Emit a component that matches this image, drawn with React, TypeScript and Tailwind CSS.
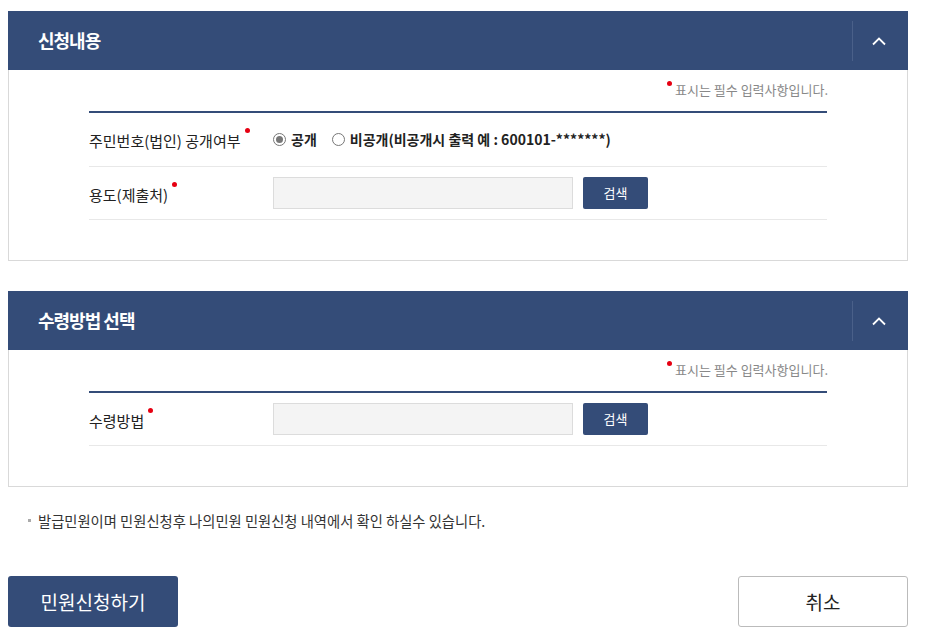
const font = { fontFamily: '"Noto Sans CJK KR", "Noto Sans", sans-serif' };

function Req() {
	return <span className="inline-block w-[5px] h-[5px] rounded-full bg-[#e60012] align-top ml-[4px] -mt-[2px]"></span>;
}

function Header({ title }: { title: string }) {
	return (
		<div className="h-[59px] bg-[#344c78] flex items-center justify-between">
			<h2 className="pl-[30px] text-[18px] font-bold text-white tracking-[-1px]">{title}</h2>
			<div className="h-[40px] w-[56px] border-l border-[#4a6089] flex items-center justify-center pr-[4px]">
				<svg width="16" height="10" viewBox="0 0 16 10" fill="none">
					<path d="M2 8.5 L8 2.5 L14 8.5" stroke="white" strokeWidth="1.8" />
				</svg>
			</div>
		</div>
	);
}

function SearchField() {
	return (
		<div className="flex items-center gap-[10px]">
			<div className="w-[300px] h-[32px] bg-[#f4f4f4] border border-[#dcdcdc]"></div>
			<button className="w-[65px] h-[32px] bg-[#344c78] text-white text-[13px] rounded-[2px]">검색</button>
		</div>
	);
}

function Note() {
	return (
		<div className="flex justify-end pr-[79px] pt-[8px] h-[41px] text-[13px] text-[#888]">
			<span className="inline-block w-[5px] h-[5px] rounded-full bg-[#e60012] mt-[3px] mr-[3px]"></span>
			<span className="mt-[2px]">표시는 필수 입력사항입니다.</span>
		</div>
	);
}

export default function App() {
	return (
		<div className="bg-white w-[928px] h-[634px] pl-[8px] pr-[20px] pt-[11px]" style={font}>
			<section>
				<Header title="신청내용" />
				<div className="border border-t-0 border-[#d9d9d9] h-[191px]">
					<Note />
					<div className="mx-[80px] border-t-2 border-[#344c78]">
						<div className="h-[54px] flex items-center border-b border-[#e8e8e8]">
							<div className="w-[184px] text-[15px] text-[#222] pt-[4px]">
								주민번호(법인) 공개여부<Req />
							</div>
							<label className="flex items-center text-[14px] font-bold text-[#222]">
								<span className="w-[13px] h-[13px] rounded-full border border-[#777] flex items-center justify-center mr-[5px]">
									<span className="w-[7px] h-[7px] rounded-full bg-[#777]"></span>
								</span>
								공개
							</label>
							<label className="flex items-center text-[14px] font-bold text-[#222] ml-[15px]">
								<span className="w-[13px] h-[13px] rounded-full border border-[#777] mr-[5px]"></span>
								비공개(비공개시 출력 예 : 600101-*******)
							</label>
						</div>
						<div className="h-[53px] flex items-center border-b border-[#e8e8e8]">
							<div className="w-[184px] text-[15px] text-[#222] pt-[4px]">
								용도(제출처)<Req />
							</div>
							<SearchField />
						</div>
					</div>
				</div>
			</section>

			<section className="mt-[30px]">
				<Header title="수령방법 선택" />
				<div className="border border-t-0 border-[#d9d9d9] h-[137px]">
					<Note />
					<div className="mx-[80px] border-t-2 border-[#344c78]">
						<div className="h-[53px] flex items-center border-b border-[#e8e8e8]">
							<div className="w-[184px] text-[15px] text-[#222] pt-[4px]">
								수령방법<Req />
							</div>
							<SearchField />
						</div>
					</div>
				</div>
			</section>

			<p className="mt-[23px] pl-[20px] flex items-center text-[14.3px] text-[#333]">
				<span className="w-[3px] h-[3px] bg-[#aaa] mr-[7px]"></span>
				발급민원이며 민원신청후 나의민원 민원신청 내역에서 확인 하실수 있습니다.
			</p>

			<div className="mt-[45px] flex justify-between">
				<button className="w-[170px] h-[51px] bg-[#344c78] text-white text-[19px] rounded-[3px]">민원신청하기</button>
				<button className="w-[170px] h-[51px] bg-white border border-[#bbb] text-[#222] text-[19px] rounded-[3px]">취소</button>
			</div>
		</div>
	);
}
